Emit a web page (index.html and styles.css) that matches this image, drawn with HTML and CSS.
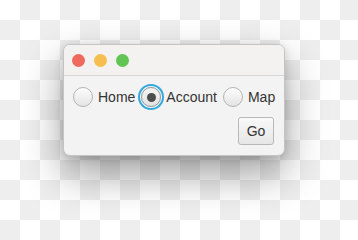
FILE: index.html
```html
<!DOCTYPE html>
<html>
<head>
<meta charset="utf-8">
<link rel="stylesheet" href="styles.css">
</head>
<body>
<div class="desktop">
  <div class="window">
    <div class="titlebar">
      <span class="light red"></span>
      <span class="light yellow"></span>
      <span class="light green"></span>
    </div>
    <div class="content">
      <div class="radios">
        <label class="radio"><span class="circle"></span><span class="label">Home</span></label>
        <label class="radio checked"><span class="circle"><span class="dot"></span></span><span class="label">Account</span></label>
        <label class="radio"><span class="circle"></span><span class="label">Map</span></label>
      </div>
      <div class="actions">
        <button class="btn">Go</button>
      </div>
    </div>
  </div>
</div>
</body>
</html>
```

FILE: styles.css
```css
html, body {
  margin: 0;
  padding: 0;
}
body {
  width: 358px;
  height: 240px;
  overflow: hidden;
  background-color: #ffffff;
  background-image: conic-gradient(#eeeeee 0 25%, #ffffff 0 50%, #eeeeee 0 75%, #ffffff 0);
  background-size: 40px 40px;
  font-family: "Liberation Sans", Arial, sans-serif;
}
.desktop {
  padding: 44px 0 0 63px;
}
.window {
  width: 220px;
  border: 1px solid #c4c4c4;
  border-radius: 7px;
  background: #f3f3f3;
  box-shadow: 0 18px 40px rgba(0, 0, 0, 0.38), 0 2px 8px rgba(0, 0, 0, 0.14);
  overflow: hidden;
}
.titlebar {
  height: 31px;
  box-sizing: border-box;
  border-bottom: 1px solid #d6d6d6;
  background: #f3f2f1;
  display: flex;
  align-items: center;
  gap: 9px;
  padding-left: 8px;
}
.light {
  width: 13px;
  height: 13px;
  border-radius: 50%;
  display: block;
}
.red { background: #ee6a5e; }
.yellow { background: #f5be4f; }
.green { background: #61c454; }
.content {
  padding: 11px 10px 10px 9px;
}
.radios {
  display: flex;
  align-items: center;
  gap: 6px;
  height: 20px;
}
.radio {
  display: flex;
  align-items: center;
  gap: 5px;
}
.circle {
  width: 20px;
  height: 20px;
  box-sizing: border-box;
  border-radius: 50%;
  border: 1px solid #b3b3b3;
  background: linear-gradient(#fdfdfd, #e4e4e4);
  display: flex;
  align-items: center;
  justify-content: center;
}
.checked .circle {
  border-color: #9a9a9a;
  box-shadow: 0 0 0 1px #f3f9fc, 0 0 0 3px #35a7dc;
  background: linear-gradient(#f4f4f4, #e2e2e2);
}
.dot {
  width: 9px;
  height: 9px;
  border-radius: 50%;
  background: #4d4d4d;
}
.label {
  font-size: 14px;
  color: #333333;
  line-height: 20px;
}
.actions {
  display: flex;
  justify-content: flex-end;
  margin-top: 10px;
}
.btn {
  width: 36px;
  height: 28px;
  border: 1px solid #b8b8b8;
  border-radius: 3px;
  background: linear-gradient(#f9f9f9, #e6e6e6);
  font-family: "Liberation Sans", Arial, sans-serif;
  font-size: 14px;
  color: #333333;
  padding: 0;
}
```
